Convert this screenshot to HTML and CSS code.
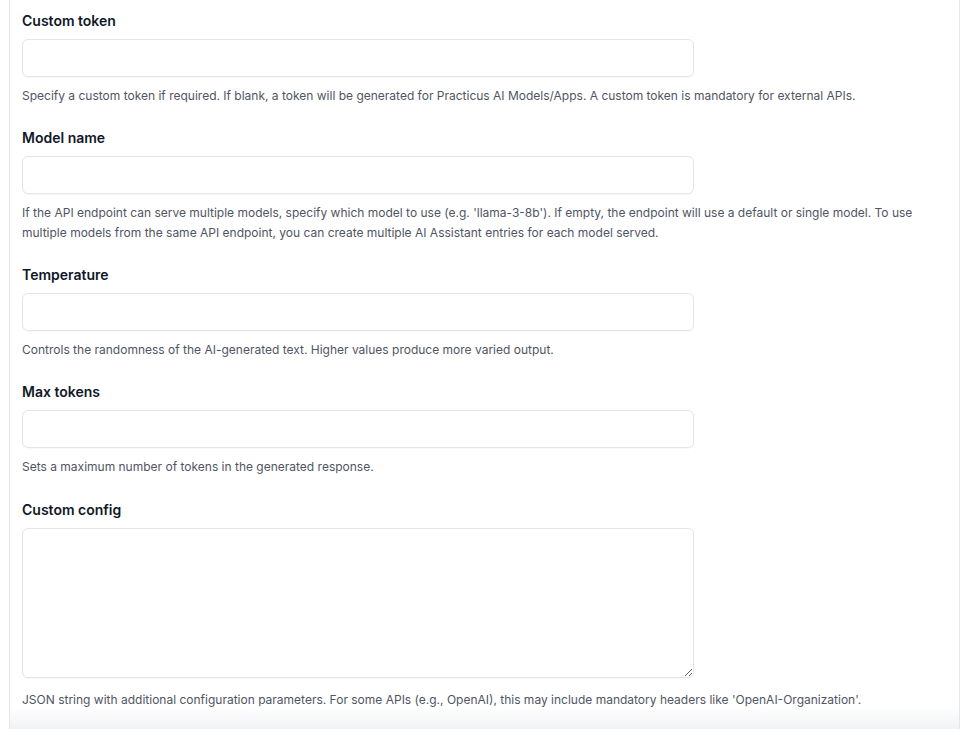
FILE: index.html
```html
<!DOCTYPE html>
<html>
<head>
<meta charset="utf-8">
<link rel="stylesheet" href="styles.css">
</head>
<body>
<div class="card">
  <form class="form">
    <div class="field">
      <label class="label">Custom token</label>
      <input class="input" type="text">
      <p class="help">Specify a custom token if required. If blank, a token will be generated for Practicus AI Models/Apps. A custom token is mandatory for external APIs.</p>
    </div>
    <div class="field">
      <label class="label">Model name</label>
      <input class="input" type="text">
      <p class="help">If the API endpoint can serve multiple models, specify which model to use (e.g. 'llama-3-8b'). If empty, the endpoint will use a default or single model. To use multiple models from the same API endpoint, you can create multiple AI Assistant entries for each model served.</p>
    </div>
    <div class="field">
      <label class="label">Temperature</label>
      <input class="input" type="text">
      <p class="help">Controls the randomness of the AI-generated text. Higher values produce more varied output.</p>
    </div>
    <div class="field field-wide">
      <label class="label">Max tokens</label>
      <input class="input" type="text">
      <p class="help">Sets a maximum number of tokens in the generated response.</p>
    </div>
    <div class="field">
      <label class="label">Custom config</label>
      <textarea class="textarea"></textarea>
      <p class="help help-area">JSON string with additional configuration parameters. For some APIs (e.g., OpenAI), this may include mandatory headers like 'OpenAI-Organization'.</p>
    </div>
  </form>
  <div class="fade"></div>
</div>
</body>
</html>
```
FILE: styles.css
```css
html, body {
  margin: 0;
  padding: 0;
  background: #ffffff;
}
body {
  font-family: Inter, "Noto Sans", "Liberation Sans", sans-serif;
  color: #111827;
}
.card {
  position: relative;
  margin-left: 9px;
  width: 951px;
  height: 729px;
  border-left: 1px solid #e6e7eb;
  border-right: 1px solid #e6e7eb;
  overflow: hidden;
  background: #fff;
  box-sizing: border-box;
}
.form {
  padding: 11px 12px 0 12px;
}
.field {
  margin-bottom: 22px;
}
.field-wide {
  margin-bottom: 23px;
}
.label {
  display: block;
  font-size: 14px;
  line-height: 20px;
  font-weight: 600;
  color: #111827;
  margin-bottom: 8px;
}
.input {
  display: block;
  box-sizing: border-box;
  width: 672px;
  height: 38px;
  border: 1px solid #e3e5e9;
  border-radius: 6px;
  background: #fff;
  box-shadow: 0 1px 1px rgba(0,0,0,0.03);
  outline: none;
  margin: 0;
}
.textarea {
  display: block;
  box-sizing: border-box;
  width: 672px;
  height: 150px;
  border: 1px solid #e3e5e9;
  border-radius: 6px;
  background: #fff;
  box-shadow: 0 1px 1px rgba(0,0,0,0.03);
  outline: none;
  margin: 0;
  resize: vertical;
}
.help {
  margin: 9px 0 0 0;
  font-size: 12px;
  line-height: 20px;
  color: #4f5563;
}
.help-area {
  margin-top: 12px;
}
.fade {
  position: absolute;
  left: 0;
  right: 0;
  bottom: 0;
  height: 22px;
  background: linear-gradient(to bottom, rgba(243,244,246,0), #f1f2f4);
  pointer-events: none;
}
```
